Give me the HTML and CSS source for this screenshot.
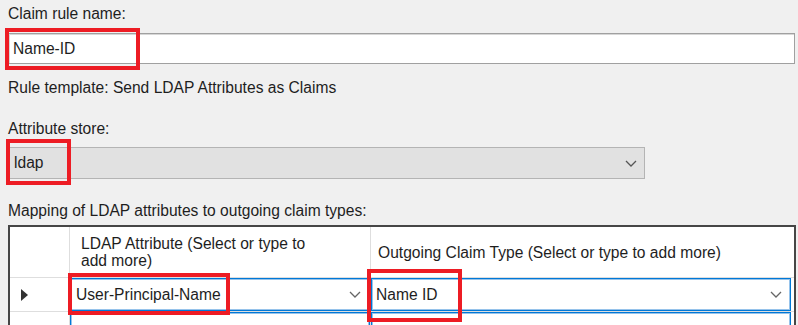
FILE: index.html
```html
<!DOCTYPE html>
<html lang="en">

<head>
    <meta charset="UTF-8">
    <meta name="viewport" content="width=device-width, initial-scale=1.0">
    <link rel="stylesheet" href="styles.css">
    <title>Claim rule</title>
</head>

<body>

    <section class="dialog">

        <div class="label first">Claim rule name:</div>
        <div class="textbox">Name-ID</div>

        <div class="label template">Rule template: Send LDAP Attributes as Claims</div>

        <div class="label store">Attribute store:</div>
        <div class="combo">
            <span>ldap</span>
            <svg class="chevron" width="12" height="7" viewBox="0 0 12 7">
                <path d="M1 1 L6 6 L11 1" fill="none" stroke="#555" stroke-width="1.3" />
            </svg>
        </div>

        <div class="label mapping">Mapping of LDAP attributes to outgoing claim types:</div>

        <div class="grid">
            <div class="row header">
                <div class="cell rowhead"></div>
                <div class="cell attr">LDAP Attribute (Select or type to add more)</div>
                <div class="cell claim">Outgoing Claim Type (Select or type to add more)</div>
            </div>

            <div class="row current">
                <div class="cell rowhead">
                    <span class="arrow"></span>
                </div>
                <div class="cell attr">
                    <div class="edit">
                        <span>User-Principal-Name</span>
                        <svg class="chevron" width="12" height="7" viewBox="0 0 12 7">
                            <path d="M1 1 L6 6 L11 1" fill="none" stroke="#666" stroke-width="1.3" />
                        </svg>
                    </div>
                </div>
                <div class="cell claim">
                    <div class="edit">
                        <span>Name ID</span>
                        <svg class="chevron" width="12" height="7" viewBox="0 0 12 7">
                            <path d="M1 1 L6 6 L11 1" fill="none" stroke="#666" stroke-width="1.3" />
                        </svg>
                    </div>
                </div>
            </div>

            <div class="row">
                <div class="cell rowhead"></div>
                <div class="cell attr"><div class="edit"></div></div>
                <div class="cell claim"><div class="edit"></div></div>
            </div>
        </div>

        <div class="mark mark-name"></div>
        <div class="mark mark-store"></div>
        <div class="mark mark-attr"></div>
        <div class="mark mark-claim"></div>

    </section>

</body>

</html>
```

FILE: styles.css
```css
* {
    box-sizing: border-box;
    font-family: "Liberation Sans", Arial, sans-serif;
    color: rgb(30, 30, 30);
}

body {
    margin: 0;
    background-color: rgb(240, 240, 240);
    overflow: hidden;
}

.dialog {
    position: relative;
    padding-left: 8px;
    height: 325px;
    overflow: hidden;
}

.label {
    font-size: 15.6px;
    line-height: 17px;
    height: 17px;
}

.first {
    padding-top: 5px;
    height: 22px;
}

.template {
    margin-top: 15px;
}

.store {
    margin-top: 24px;
}

.mapping {
    margin-top: 23px;
}

.textbox {
    margin-top: 11px;
    width: 787px;
    height: 31px;
    background-color: white;
    border: 1px solid rgb(160, 160, 160);
    box-shadow: inset 1px 1px 0 rgb(215, 215, 215);
    font-size: 15.6px;
    line-height: 29px;
    padding-left: 4px;
}

.combo {
    margin-top: 10px;
    width: 637px;
    height: 32px;
    background-color: rgb(225, 225, 225);
    border: 1px solid rgb(180, 180, 180);
    display: flex;
    align-items: center;
    justify-content: space-between;
    padding: 0 7px 0 5px;
    font-size: 15.6px;
}

.grid {
    margin-top: 6px;
    width: 788px;
    border: 2px solid rgb(70, 70, 70);
    border-bottom: none;
    background-color: white;
}

.row {
    display: grid;
    grid-template-columns: 60px 301px 1fr;
}

.cell {
    border-right: 1px solid rgb(222, 222, 222);
    border-bottom: 1px solid rgb(222, 222, 222);
    font-size: 15.6px;
}

.cell.claim {
    border-right: none;
}

.header {
    height: 51px;
}

.header .cell {
    display: flex;
    align-items: center;
    padding: 0 8px 0 11px;
    line-height: 17px;
}

.header .attr {
    padding-right: 40px;
}

.header .claim {
    padding-left: 7px;
}

.current {
    height: 34px;
}

.row:last-child {
    height: 40px;
}

.rowhead {
    display: flex;
    align-items: center;
    padding-left: 11px;
}

.arrow {
    width: 0;
    height: 0;
    border-top: 6px solid transparent;
    border-bottom: 6px solid transparent;
    border-left: 7px solid rgb(50, 50, 50);
}

.edit {
    height: 100%;
    border: 1px solid rgb(0, 120, 215);
    box-shadow: inset 0 0 0 1px rgb(150, 195, 235);
    display: flex;
    align-items: center;
    justify-content: space-between;
    padding: 0 8px 0 5px;
}

.claim .edit {
    margin-right: 3px;
    padding-left: 4px;
}

.mark {
    position: absolute;
    border: 4px solid rgb(237, 28, 36);
}

.mark-name {
    left: 5px;
    top: 28px;
    width: 135px;
    height: 42px;
}

.mark-store {
    left: 6px;
    top: 139px;
    width: 65px;
    height: 46px;
}

.mark-attr {
    left: 68px;
    top: 273px;
    width: 162px;
    height: 42px;
}

.mark-claim {
    left: 367px;
    top: 269px;
    width: 95px;
    height: 53px;
}
```
